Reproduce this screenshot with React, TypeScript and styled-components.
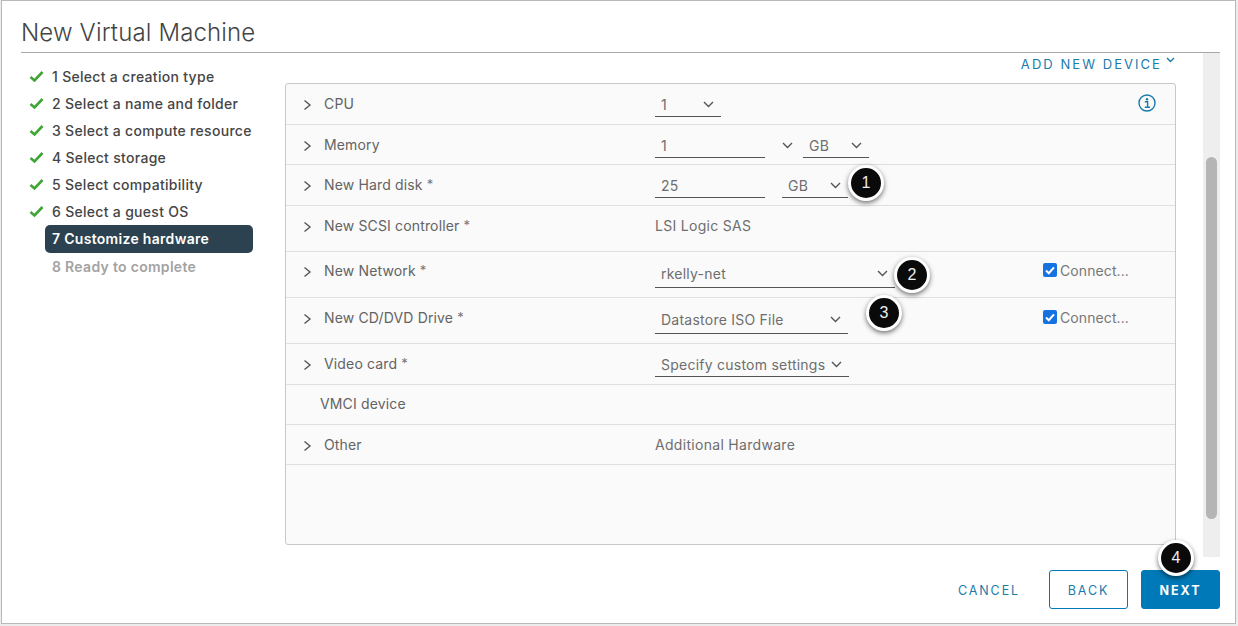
import React from "react";
import styled, { createGlobalStyle } from "styled-components";

const Global = createGlobalStyle`
  html, body { margin: 0; padding: 0; background: #f2f2f2; }
  body { font-family: "Inter", "Liberation Sans", sans-serif; }
  #root { width: 1238px; height: 626px; overflow: hidden; }
`;
const Page = styled.div`
  width: 1238px; height: 626px; box-sizing: border-box;
  padding: 1px 3px 3px 2px; background: #ececec;
`;
const Dialog = styled.div`
  position: relative; width: 100%; height: 100%; box-sizing: border-box;
  background: #fff; padding: 0 15px 0 19px;
  display: flex; flex-direction: column;
  box-shadow: 0 0 0 1px #b9b9b9;
`;
const Header = styled.header`
  height: 52px; box-sizing: border-box; border-bottom: 1px solid #a8a8a8;
  display: flex; align-items: flex-end;
`;
const Title = styled.h1`
  margin: 0 0 3px; font-weight: 300; font-size: 24px; line-height: 32px;
  color: #444; letter-spacing: .15px;
`;
const Body = styled.div`
  height: 504px; display: grid; grid-template-columns: 240px 1fr 17px;
`;
const Nav = styled.nav`
  padding: 10px 0 0 28px; display: flex; flex-direction: column;
`;
const Step = styled.div<{ $active?: boolean; $muted?: boolean }>`
  width: 208px; height: ${(p) => (p.$active ? 28 : 27)}px; box-sizing: border-box; flex: none;
  display: flex; align-items: center; position: relative;
  padding: 0 0 ${(p) => (p.$active ? 2 : 0)}px 7px; margin-left: -4px; border-radius: 5px;
  font-size: 14px; font-weight: ${(p) => (p.$active || p.$muted ? 600 : 500)};
  letter-spacing: .3px;
  color: ${(p) => (p.$active ? "#fff" : p.$muted ? "#a3a3a3" : "#454545")};
  background: ${(p) => (p.$active ? "#2c4250" : "transparent")};
`;
const Check = styled.svg`
  position: absolute; left: -16px; top: 7px; width: 15px; height: 13px;
`;
const Main = styled.main`
  padding: 0 27px 0 24px; min-width: 0;
  display: flex; flex-direction: column;
`;
const AddRow = styled.div`
  height: 30px; display: flex; justify-content: flex-end; align-items: flex-start; padding-top: 3px; box-sizing: border-box;
`;
const AddDevice = styled.a`
  color: #1a7bab; font-size: 13px; font-weight: 400; letter-spacing: 2.05px; line-height: 16px;
  display: flex; align-items: flex-start; gap: 2px; padding-right: 1px;
`;
const Table = styled.div`
  height: 462px; box-sizing: border-box; border: 1px solid #c8c8c8; border-radius: 3px;
  background: #fafafa; display: flex; flex-direction: column;
`;
const Row = styled.div<{ $h: number; $top?: number }>`
  height: ${(p) => p.$h}px; box-sizing: border-box; flex: none;
  border-bottom: 1px solid #dfdfdf;
  display: grid; grid-template-columns: 369px 1fr auto; align-items: start;
  padding-top: ${(p) => p.$top ?? 9}px; padding-right: 19px;
`;
const Label = styled.div<{ $plain?: boolean }>`
  display: flex; align-items: center; height: 20px;
  padding-left: ${(p) => (p.$plain ? 34 : 17)}px;
  color: #636363; font-size: 14px; letter-spacing: .15px; font-weight: 400;
`;
const Chevron = styled.svg`
  width: 9px; height: 12px; margin-right: 12px; flex: none; position: relative; top: 2px;
`;
const Star = styled.span` color: #777; margin-left: 4px; font-size: 13px; `;
const Fields = styled.div` display: flex; align-items: flex-start; `;
const Field = styled.div<{ $w: number; $ml?: number; $h?: number }>`
  width: ${(p) => p.$w}px; margin-left: ${(p) => p.$ml ?? 0}px; height: ${(p) => p.$h ?? 24}px; box-sizing: border-box;
  border-bottom: 1px solid #555;
  display: flex; align-items: center; justify-content: space-between;
  padding: 0 7px 1px 6px; flex: none;
  color: #6e6e6e; font-size: 14px; letter-spacing: .24px; white-space: nowrap;
`;
const Caret = styled.svg` width: 11px; height: 7px; flex: none; `;
const Loose = styled.div`
  margin-left: 17px; width: 11px; height: 22px; display: flex; align-items: center; margin-right: 10px;
`;
const Plain = styled.div`
  color: #6e6e6e; font-size: 14px; letter-spacing: .3px; line-height: 22px;
`;
const ConnectWrap = styled.label`
  display: flex; align-items: center; gap: 3px; color: #777; font-size: 14px; letter-spacing: .1px; height: 20px; margin-right: 27px;
`;
const Box = styled.span`
  width: 14px; height: 14px; border-radius: 2px; background: #1672e0; display: flex; align-items: center; justify-content: center;
`;
const Info = styled.svg` width: 18px; height: 18px; display: block; margin-top: 1px; `;
const Rail = styled.div`
  background: #eeeeee; position: relative; padding: 104px 3px 0;
`;
const Thumb = styled.div`
  width: 11px; height: 362px; background: #b5b5b5; border-radius: 6px;
`;
const Footer = styled.footer`
  flex: 1; display: flex; justify-content: flex-end; align-items: flex-start; padding-top: 13px;
`;
const Btn = styled.button<{ $kind: "flat" | "outline" | "solid" }>`
  height: 39px; box-sizing: border-box; border-radius: 3px; font-family: inherit; cursor: pointer;
  font-size: 12.5px; letter-spacing: 1.9px; padding: 1px 0 0;
  margin-left: ${(p) => (p.$kind === "solid" ? 13 : 0)}px;
  margin-right: ${(p) => (p.$kind === "flat" ? 20 : 0)}px;
  font-weight: ${(p) => (p.$kind === "solid" ? 700 : 400)};
  width: ${(p) => (p.$kind === "flat" ? 80 : 79)}px;
  color: ${(p) => (p.$kind === "solid" ? "#fff" : "#1a7bab")};
  background: ${(p) => (p.$kind === "solid" ? "#0079b8" : "transparent")};
  border: ${(p) => (p.$kind === "flat" ? "none" : "1px solid #0079b8")};
`;
const Badge = styled.div<{ $x: number; $y: number }>`
  position: absolute; left: ${(p) => p.$x}px; top: ${(p) => p.$y}px;
  width: 30px; height: 30px; border-radius: 50%; background: #0a0a0a; border: 3px solid #fff;
  box-shadow: 0 2px 5px rgba(0,0,0,.55);
  color: #eee; font-family: "Liberation Sans", sans-serif; font-size: 16px;
  display: flex; align-items: center; justify-content: center;
`;

const ChevronIcon = () => (
  <Chevron viewBox="0 0 9 12"><path d="M1.5 1.5 7 6l-5.5 4.5" fill="none" stroke="#555" strokeWidth="1.4" /></Chevron>
);
const CaretIcon = () => (
  <Caret viewBox="0 0 11 7"><path d="M1 1l4.5 4.5L10 1" fill="none" stroke="#555" strokeWidth="1.4" /></Caret>
);
const Connect = () => (
  <ConnectWrap>
    <Box>
      <svg width="10" height="9" viewBox="0 0 10 9"><path d="M1 4.5 3.8 7.2 9 1.3" fill="none" stroke="#fff" strokeWidth="2" /></svg>
    </Box>
    Connect...
  </ConnectWrap>
);

const done = ["1 Select a creation type", "2 Select a name and folder", "3 Select a compute resource", "4 Select storage", "5 Select compatibility", "6 Select a guest OS"];

export default function App() {
  return (
    <Page>
      <Global />
      <Dialog>
        <Header><Title>New Virtual Machine</Title></Header>
        <Body>
          <Nav>
            {done.map((s) => (
              <Step key={s}>
                <Check viewBox="0 0 15 13"><path d="M1.5 7 5.5 10.5 13.5 2" fill="none" stroke="#3fa535" strokeWidth="2.6" /></Check>
                {s}
              </Step>
            ))}
            <Step $active>7 Customize hardware</Step>
            <Step $muted>8 Ready to complete</Step>
          </Nav>
          <Main>
            <AddRow>
              <AddDevice>
                ADD NEW DEVICE
                <svg width="9" height="8" viewBox="0 0 9 8" style={{ marginLeft: 2 }}><path d="M1 2l3.5 3.5L8 2" fill="none" stroke="#1a7bab" strokeWidth="1.4" /></svg>
              </AddDevice>
            </AddRow>
            <Table>
              <Row $h={41}>
                <Label><ChevronIcon />CPU</Label>
                <Fields><Field $w={66}>1<CaretIcon /></Field></Fields>
                <Info viewBox="0 0 18 18">
                  <circle cx="9" cy="9" r="8" fill="none" stroke="#1a7bab" strokeWidth="1.4" />
                  <circle cx="9" cy="5.2" r="1.2" fill="#1a7bab" />
                  <path d="M6.8 7.8H9.6V13M6.8 13.3h5.2" fill="none" stroke="#1a7bab" strokeWidth="1.4" />
                </Info>
              </Row>
              <Row $h={40}>
                <Label><ChevronIcon />Memory</Label>
                <Fields>
                  <Field $w={110}>1</Field>
                  <Loose><CaretIcon /></Loose>
                  <Field $w={66}>GB<CaretIcon /></Field>
                </Fields>
              </Row>
              <Row $h={41}>
                <Label><ChevronIcon />New Hard disk<Star>*</Star></Label>
                <Fields>
                  <Field $w={110}>25</Field>
                  <Field $w={66} $ml={17}>GB<CaretIcon /></Field>
                </Fields>
              </Row>
              <Row $h={46}>
                <Label><ChevronIcon />New SCSI controller<Star>*</Star></Label>
                <Plain>LSI Logic SAS</Plain>
              </Row>
              <Row $h={46} $top={8}>
                <Label><ChevronIcon />New Network<Star>*</Star></Label>
                <Fields><Field $w={240} $h={28}>rkelly-net<CaretIcon /></Field></Fields>
                <Connect />
              </Row>
              <Row $h={46}>
                <Label><ChevronIcon />New CD/DVD Drive<Star>*</Star></Label>
                <Fields><Field $w={193} $h={27}>Datastore ISO File<CaretIcon /></Field></Fields>
                <Connect />
              </Row>
              <Row $h={41}>
                <Label><ChevronIcon />Video card<Star>*</Star></Label>
                <Fields><Field $w={194}>Specify custom settings<CaretIcon /></Field></Fields>
              </Row>
              <Row $h={40} $top={8}>
                <Label $plain>VMCI device</Label>
              </Row>
              <Row $h={40}>
                <Label><ChevronIcon />Other</Label>
                <Plain>Additional Hardware</Plain>
              </Row>
            </Table>
          </Main>
          <Rail><Thumb /></Rail>
        </Body>
        <Footer>
          <Btn $kind="flat">CANCEL</Btn>
          <Btn $kind="outline">BACK</Btn>
          <Btn $kind="solid">NEXT</Btn>
        </Footer>
        <Badge $x={846} $y={164}>1</Badge>
        <Badge $x={892} $y={256}>2</Badge>
        <Badge $x={864} $y={294}>3</Badge>
        <Badge $x={1156} $y={539}>4</Badge>
      </Dialog>
    </Page>
  );
}
